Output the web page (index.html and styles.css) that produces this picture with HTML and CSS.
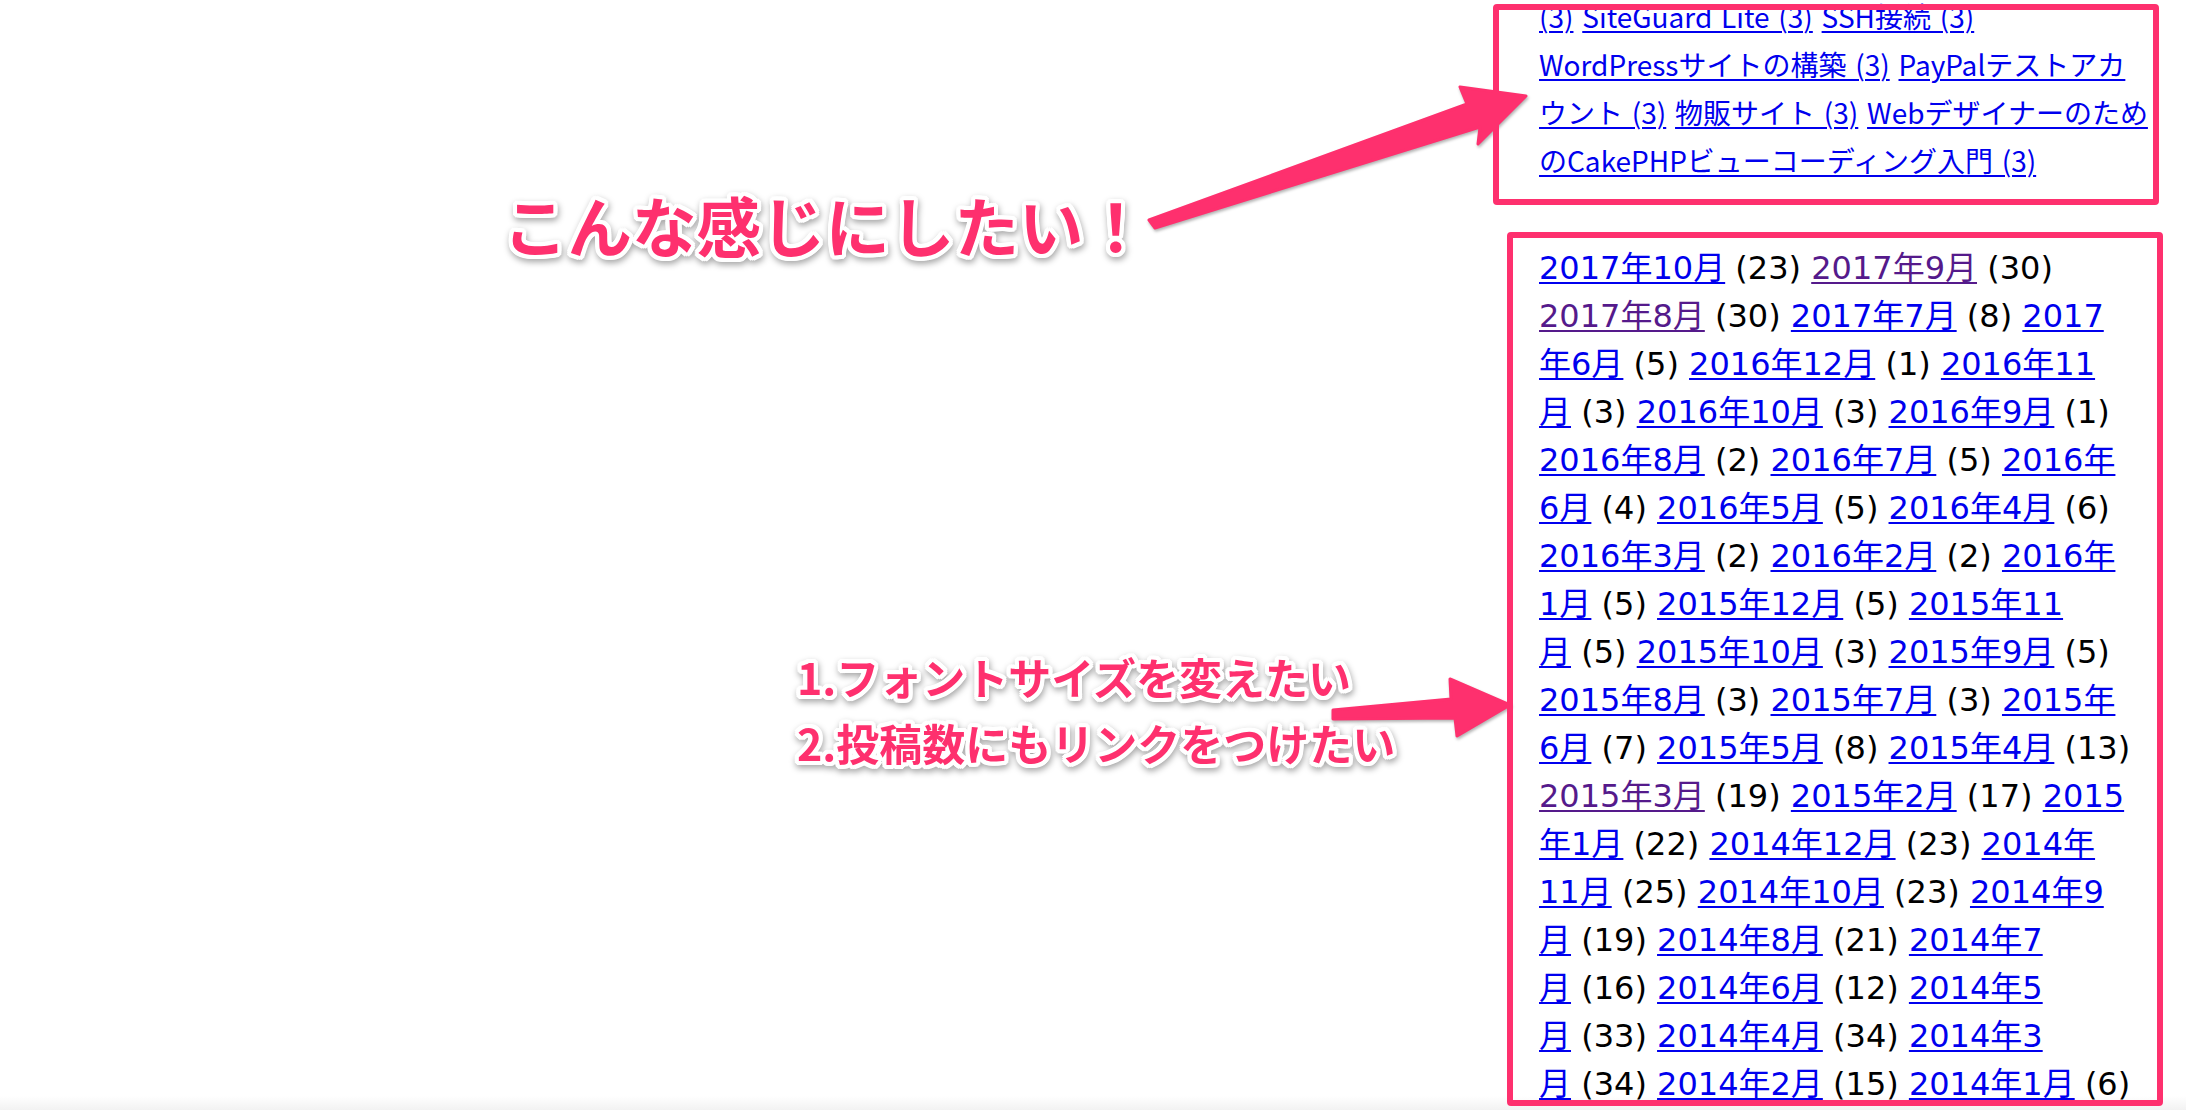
FILE: index.html
```html
<!DOCTYPE html>
<html lang="ja">
<head>
<meta charset="utf-8">
<title>アーカイブ</title>
<link rel="stylesheet" href="styles.css">
</head>
<body>
<div class="page">
  <div class="canvas">
    <p class="note note-main">こんな感じにしたい！</p>
    <p class="note note-list">1.フォントサイズを変えたい<br>2.投稿数にもリンクをつけたい</p>
    <svg class="arrow arrow-1" width="2186" height="1110" viewBox="0 0 2186 1110">
      <polygon points="1149,220 1467,104 1460,87 1526,96 1478,144 1480,127 1155,228" />
    </svg>
    <svg class="arrow arrow-2" width="2186" height="1110" viewBox="0 0 2186 1110">
      <polygon points="1333,710 1451,699 1450,679 1510,705 1457,736 1455,718 1333,719" />
    </svg>
  </div>
  <aside class="sidebar">
    <div class="widget widget-tags">
      <a href="#">(3)</a> <a href="#">SiteGuard Lite (3)</a> <a href="#">SSH接続 (3)</a><br>
      <a href="#">WordPressサイトの構築 (3)</a> <a href="#">PayPalテストアカ<br>ウント (3)</a> <a href="#">物販サイト (3)</a> <a href="#">Webデザイナーのため<br>のCakePHPビューコーディング入門 (3)</a>
    </div>
    <div class="widget widget-archive">
      <a href="#">2017年10月</a>&nbsp;(23) <a class="seen" href="#">2017年9月</a>&nbsp;(30)<br>
      <a class="seen" href="#">2017年8月</a>&nbsp;(30) <a href="#">2017年7月</a>&nbsp;(8) <a href="#">2017<br>年6月</a>&nbsp;(5) <a href="#">2016年12月</a>&nbsp;(1) <a href="#">2016年11<br>月</a>&nbsp;(3) <a href="#">2016年10月</a>&nbsp;(3) <a href="#">2016年9月</a>&nbsp;(1)<br>
      <a href="#">2016年8月</a>&nbsp;(2) <a href="#">2016年7月</a>&nbsp;(5) <a href="#">2016年<br>6月</a>&nbsp;(4) <a href="#">2016年5月</a>&nbsp;(5) <a href="#">2016年4月</a>&nbsp;(6)<br>
      <a href="#">2016年3月</a>&nbsp;(2) <a href="#">2016年2月</a>&nbsp;(2) <a href="#">2016年<br>1月</a>&nbsp;(5) <a href="#">2015年12月</a>&nbsp;(5) <a href="#">2015年11<br>月</a>&nbsp;(5) <a href="#">2015年10月</a>&nbsp;(3) <a href="#">2015年9月</a>&nbsp;(5)<br>
      <a href="#">2015年8月</a>&nbsp;(3) <a href="#">2015年7月</a>&nbsp;(3) <a href="#">2015年<br>6月</a>&nbsp;(7) <a href="#">2015年5月</a>&nbsp;(8) <a href="#">2015年4月</a>&nbsp;(13)<br>
      <a class="seen" href="#">2015年3月</a>&nbsp;(19) <a href="#">2015年2月</a>&nbsp;(17) <a href="#">2015<br>年1月</a>&nbsp;(22) <a href="#">2014年12月</a>&nbsp;(23) <a href="#">2014年<br>11月</a>&nbsp;(25) <a href="#">2014年10月</a>&nbsp;(23) <a href="#">2014年9<br>月</a>&nbsp;(19) <a href="#">2014年8月</a>&nbsp;(21) <a href="#">2014年7<br>月</a>&nbsp;(16) <a href="#">2014年6月</a>&nbsp;(12) <a href="#">2014年5<br>月</a>&nbsp;(33) <a href="#">2014年4月</a>&nbsp;(34) <a href="#">2014年3<br>月</a>&nbsp;(34) <a href="#">2014年2月</a>&nbsp;(15) <a href="#">2014年1月</a>&nbsp;(6)
    </div>
    <span class="frame frame-top"></span>
    <span class="frame frame-bottom"></span>
  </aside>
</div>
</body>
</html>
```

FILE: styles.css
```css
* { box-sizing: border-box; }
html, body {
  margin: 0;
  padding: 0;
  width: 2186px;
  height: 1110px;
  overflow: hidden;
  background: #ffffff;
}
.page {
  position: relative;
  display: flex;
  width: 2186px;
  height: 1110px;
  background: linear-gradient(to bottom, #ffffff 0, #ffffff 1096px, #f2f2f2 1110px);
}
.canvas {
  position: relative;
  width: 1539px;
  flex: none;
}
.sidebar {
  flex: 1;
  color: #000;
  white-space: nowrap;
  line-height: 48px;
}
.widget a { color: #0000ee; text-decoration: underline; text-underline-offset: 3px; text-decoration-thickness: 2px; }
.widget a.seen { color: #551a8b; }
.widget-tags {
  margin-top: -8px;
  font-family: "Noto Sans CJK JP", sans-serif;
  font-size: 28px;
  word-spacing: 2.5px;
}
.widget-archive {
  margin-top: 60px;
  font-family: "DejaVu Sans", "Noto Sans CJK JP", sans-serif;
  font-size: 32px;
}

.frame {
  position: absolute;
  border: 6px solid #fe306e;
  border-radius: 4px;
  pointer-events: none;
}
.frame-top { left: 1493px; top: 4px; width: 666px; height: 201px; }
.frame-bottom { left: 1507px; top: 232px; width: 656px; height: 874px; }

.note {
  position: absolute;
  margin: 0;
  font-family: "Noto Sans CJK JP", sans-serif;
  font-weight: 700;
  color: #fe306e;
  white-space: nowrap;
  text-shadow:
    4px 0 0 #fff, -4px 0 0 #fff, 0 4px 0 #fff, 0 -4px 0 #fff,
    3px 3px 0 #fff, -3px -3px 0 #fff, 3px -3px 0 #fff, -3px 3px 0 #fff,
    2px 4px 0 #fff, -2px 4px 0 #fff, 2px -4px 0 #fff, -2px -4px 0 #fff,
    4px 2px 0 #fff, -4px 2px 0 #fff, 4px -2px 0 #fff, -4px -2px 0 #fff;
  filter: drop-shadow(1px 3px 3px rgba(0,0,0,0.35));
}
.note-main {
  left: 503px;
  top: 180px;
  font-size: 64.5px;
  line-height: 88px;
}
.note-list {
  left: 797px;
  top: 643px;
  font-size: 43px;
  line-height: 66px;
}
.arrow {
  position: absolute;
  left: 0;
  top: 0;
  overflow: visible;
  filter: drop-shadow(1px 2px 1.5px rgba(0,0,0,0.3));
}
.arrow polygon { fill: #fe306e; stroke: #fe306e; stroke-width: 3; stroke-linejoin: round; }
```
